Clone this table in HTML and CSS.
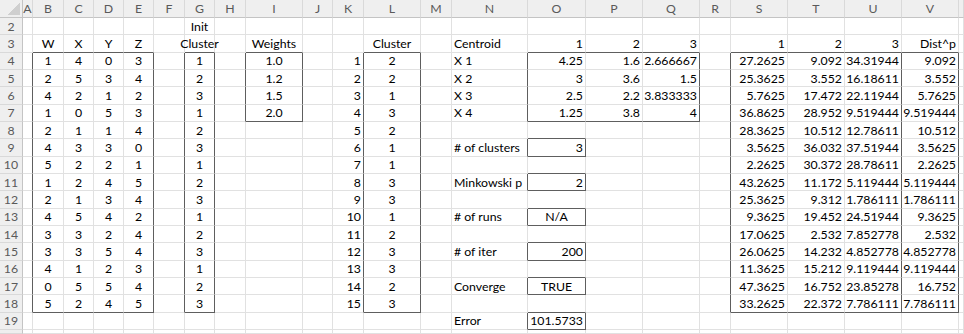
FILE: index.html
```html
<!DOCTYPE html>
<html lang="en">
<head>
<meta charset="utf-8">
<title>K-means sheet</title>
<link rel="stylesheet" href="styles.css">
</head>
<body>
<div class="sheet">
  <div class="row hd">
    <span class="corner"><i class="tri"></i></span><span>A</span><span>B</span><span>C</span><span>D</span><span>E</span><span>F</span><span>G</span><span>H</span><span>I</span><span>J</span><span>K</span><span>L</span><span>M</span><span>N</span><span>O</span><span>P</span><span>Q</span><span>R</span><span>S</span><span>T</span><span>U</span><span>V</span><span></span>
  </div>
  <div class="row">
    <span class="rh">2</span><span></span><span></span><span></span><span></span><span></span><span></span><span class="c">Init</span><span></span><span></span><span></span><span></span><span></span><span></span><span></span><span></span><span></span><span></span><span></span><span></span><span></span><span></span><span></span><span></span>
  </div>
  <div class="row">
    <span class="rh">3</span><span></span><span class="c b">W</span><span class="c b">X</span><span class="c b">Y</span><span class="c b">Z</span><span></span><span class="c b">Cluster</span><span></span><span class="c b">Weights</span><span></span><span></span><span class="c b">Cluster</span><span></span><span>Centroid</span><span class="n b">1</span><span class="n b">2</span><span class="n b">3</span><span></span><span class="n b">1</span><span class="n b">2</span><span class="n b">3</span><span class="n b">Dist^p</span><span></span>
  </div>
  <div class="row">
    <span class="rh">4</span><span class="r"></span><span class="c">1</span><span class="c">4</span><span class="c">0</span><span class="c r">3</span><span class="r"></span><span class="c r">1</span><span class="r"></span><span class="c r">1.0</span><span></span><span class="n r">1</span><span class="c r">2</span><span></span><span class="r">X 1</span><span class="n">4.25</span><span class="n">1.6</span><span class="n r">2.666667</span><span class="r"></span><span class="n">27.2625</span><span class="n">9.092</span><span class="n r">34.31944</span><span class="n r">9.092</span><span></span>
  </div>
  <div class="row">
    <span class="rh">5</span><span class="r"></span><span class="c">2</span><span class="c">5</span><span class="c">3</span><span class="c r">4</span><span class="r"></span><span class="c r">2</span><span class="r"></span><span class="c r">1.2</span><span></span><span class="n r">2</span><span class="c r">2</span><span></span><span class="r">X 2</span><span class="n">3</span><span class="n">3.6</span><span class="n r">1.5</span><span class="r"></span><span class="n">25.3625</span><span class="n">3.552</span><span class="n r">16.18611</span><span class="n r">3.552</span><span></span>
  </div>
  <div class="row">
    <span class="rh">6</span><span class="r"></span><span class="c">4</span><span class="c">2</span><span class="c">1</span><span class="c r">2</span><span class="r"></span><span class="c r">3</span><span class="r"></span><span class="c r">1.5</span><span></span><span class="n r">3</span><span class="c r">1</span><span></span><span class="r">X 3</span><span class="n">2.5</span><span class="n">2.2</span><span class="n r">3.833333</span><span class="r"></span><span class="n">5.7625</span><span class="n">17.472</span><span class="n r">22.11944</span><span class="n r">5.7625</span><span></span>
  </div>
  <div class="row">
    <span class="rh">7</span><span class="r"></span><span class="c">1</span><span class="c">0</span><span class="c">5</span><span class="c r">3</span><span class="r"></span><span class="c r">1</span><span class="r"></span><span class="c r b">2.0</span><span></span><span class="n r">4</span><span class="c r">3</span><span></span><span class="r">X 4</span><span class="n b">1.25</span><span class="n b">3.8</span><span class="n r b">4</span><span class="r"></span><span class="n">36.8625</span><span class="n">28.952</span><span class="n r">9.519444</span><span class="n r">9.519444</span><span></span>
  </div>
  <div class="row">
    <span class="rh">8</span><span class="r"></span><span class="c">2</span><span class="c">1</span><span class="c">1</span><span class="c r">4</span><span class="r"></span><span class="c r">2</span><span></span><span></span><span></span><span class="n r">5</span><span class="c r">2</span><span></span><span></span><span class="b"></span><span></span><span></span><span class="r"></span><span class="n">28.3625</span><span class="n">10.512</span><span class="n r">12.78611</span><span class="n r">10.512</span><span></span>
  </div>
  <div class="row">
    <span class="rh">9</span><span class="r"></span><span class="c">4</span><span class="c">3</span><span class="c">3</span><span class="c r">0</span><span class="r"></span><span class="c r">3</span><span></span><span></span><span></span><span class="n r">6</span><span class="c r">1</span><span></span><span class="r"># of clusters</span><span class="n r b">3</span><span></span><span></span><span class="r"></span><span class="n">3.5625</span><span class="n">36.032</span><span class="n r">37.51944</span><span class="n r">3.5625</span><span></span>
  </div>
  <div class="row">
    <span class="rh">10</span><span class="r"></span><span class="c">5</span><span class="c">2</span><span class="c">2</span><span class="c r">1</span><span class="r"></span><span class="c r">1</span><span></span><span></span><span></span><span class="n r">7</span><span class="c r">1</span><span></span><span></span><span class="b"></span><span></span><span></span><span class="r"></span><span class="n">2.2625</span><span class="n">30.372</span><span class="n r">28.78611</span><span class="n r">2.2625</span><span></span>
  </div>
  <div class="row">
    <span class="rh">11</span><span class="r"></span><span class="c">1</span><span class="c">2</span><span class="c">4</span><span class="c r">5</span><span class="r"></span><span class="c r">2</span><span></span><span></span><span></span><span class="n r">8</span><span class="c r">3</span><span></span><span class="r">Minkowski p</span><span class="n r b">2</span><span></span><span></span><span class="r"></span><span class="n">43.2625</span><span class="n">11.172</span><span class="n r">5.119444</span><span class="n r">5.119444</span><span></span>
  </div>
  <div class="row">
    <span class="rh">12</span><span class="r"></span><span class="c">2</span><span class="c">1</span><span class="c">3</span><span class="c r">4</span><span class="r"></span><span class="c r">3</span><span></span><span></span><span></span><span class="n r">9</span><span class="c r">3</span><span></span><span></span><span class="b"></span><span></span><span></span><span class="r"></span><span class="n">25.3625</span><span class="n">9.312</span><span class="n r">1.786111</span><span class="n r">1.786111</span><span></span>
  </div>
  <div class="row">
    <span class="rh">13</span><span class="r"></span><span class="c">4</span><span class="c">5</span><span class="c">4</span><span class="c r">2</span><span class="r"></span><span class="c r">1</span><span></span><span></span><span></span><span class="n r">10</span><span class="c r">1</span><span></span><span class="r"># of runs</span><span class="c r b">N/A</span><span></span><span></span><span class="r"></span><span class="n">9.3625</span><span class="n">19.452</span><span class="n r">24.51944</span><span class="n r">9.3625</span><span></span>
  </div>
  <div class="row">
    <span class="rh">14</span><span class="r"></span><span class="c">3</span><span class="c">3</span><span class="c">2</span><span class="c r">4</span><span class="r"></span><span class="c r">2</span><span></span><span></span><span></span><span class="n r">11</span><span class="c r">2</span><span></span><span></span><span class="b"></span><span></span><span></span><span class="r"></span><span class="n">17.0625</span><span class="n">2.532</span><span class="n r">7.852778</span><span class="n r">2.532</span><span></span>
  </div>
  <div class="row">
    <span class="rh">15</span><span class="r"></span><span class="c">3</span><span class="c">3</span><span class="c">5</span><span class="c r">4</span><span class="r"></span><span class="c r">3</span><span></span><span></span><span></span><span class="n r">12</span><span class="c r">3</span><span></span><span class="r"># of iter</span><span class="n r b">200</span><span></span><span></span><span class="r"></span><span class="n">26.0625</span><span class="n">14.232</span><span class="n r">4.852778</span><span class="n r">4.852778</span><span></span>
  </div>
  <div class="row">
    <span class="rh">16</span><span class="r"></span><span class="c">4</span><span class="c">1</span><span class="c">2</span><span class="c r">3</span><span class="r"></span><span class="c r">1</span><span></span><span></span><span></span><span class="n r">13</span><span class="c r">3</span><span></span><span></span><span class="b"></span><span></span><span></span><span class="r"></span><span class="n">11.3625</span><span class="n">15.212</span><span class="n r">9.119444</span><span class="n r">9.119444</span><span></span>
  </div>
  <div class="row">
    <span class="rh">17</span><span class="r"></span><span class="c">0</span><span class="c">5</span><span class="c">5</span><span class="c r">4</span><span class="r"></span><span class="c r">2</span><span></span><span></span><span></span><span class="n r">14</span><span class="c r">2</span><span></span><span class="r">Converge</span><span class="c r b">TRUE</span><span></span><span></span><span class="r"></span><span class="n">47.3625</span><span class="n">16.752</span><span class="n r">23.85278</span><span class="n r">16.752</span><span></span>
  </div>
  <div class="row">
    <span class="rh">18</span><span class="r"></span><span class="c b">5</span><span class="c b">2</span><span class="c b">4</span><span class="c r b">5</span><span class="r"></span><span class="c r b">3</span><span></span><span></span><span></span><span class="n r">15</span><span class="c r b">3</span><span></span><span></span><span class="b"></span><span></span><span></span><span class="r"></span><span class="n b">33.2625</span><span class="n b">22.372</span><span class="n r b">7.786111</span><span class="n r b">7.786111</span><span></span>
  </div>
  <div class="row">
    <span class="rh">19</span><span></span><span></span><span></span><span></span><span></span><span></span><span></span><span></span><span></span><span></span><span></span><span></span><span></span><span class="r">Error</span><span class="n r b">101.5733</span><span></span><span></span><span></span><span></span><span></span><span></span><span></span><span></span>
  </div>
  <div class="row">
    <span class="rh"></span><span></span><span></span><span></span><span></span><span></span><span></span><span></span><span></span><span></span><span></span><span></span><span></span><span></span><span></span><span></span><span></span><span></span><span></span><span></span><span></span><span></span><span></span><span></span>
  </div>
</div>
</body>
</html>
```
FILE: styles.css
```css
html, body {
  margin: 0;
  background: #fff;
}

body {
  font-family: Lato, "Liberation Sans", sans-serif;
  font-size: 12.3px;
  color: #000;
}

.sheet {
  display: grid;
  grid-template-columns: 23px 10px 31px 30px 30px 30px 31px 30px 31px 57px 30px 31px 57px 31px 76px 58px 57px 57px 31px 57px 57px 57px 57px 1fr;
  grid-template-rows: 18px repeat(18, 17.333px) 1fr;
  width: 964px;
  height: 334px;
  overflow: hidden;
}

.row {
  display: contents;
}

.sheet span {
  box-sizing: border-box;
  display: flex;
  align-items: center;
  justify-content: flex-start;
  padding: 0 2px;
  white-space: nowrap;
  min-width: 0;
  border-right: 1px solid #e1e1e1;
  border-bottom: 1px solid #e1e1e1;
}

.sheet .c { justify-content: center; }
.sheet .n { justify-content: flex-end; }
.sheet .r { border-right-color: #5e5e5e; }
.sheet .b { border-bottom-color: #5e5e5e; }

.hd span {
  background: #efefef;
  color: #5a5a5a;
  justify-content: center;
  border-right-color: #d9d9d9;
  border-bottom-color: #c4c4c4;
}

.sheet .rh {
  background: #efefef;
  color: #5a5a5a;
  justify-content: center;
  border-right-color: #c4c4c4;
  border-bottom-color: #d9d9d9;
}

.hd .corner {
  justify-content: flex-end;
  align-items: flex-end;
  padding: 0 2px 2px 0;
  border-right-color: #c4c4c4;
}

.tri {
  display: block;
  width: 13px;
  height: 13px;
  background: linear-gradient(135deg, transparent 50%, #cfcfcf 50%);
}
```
